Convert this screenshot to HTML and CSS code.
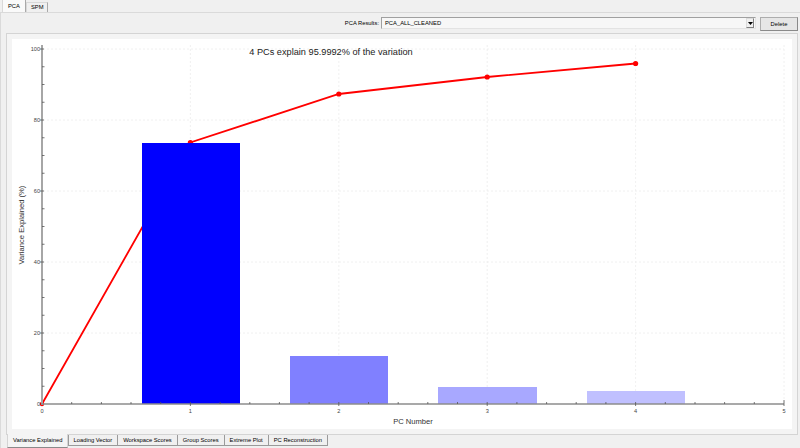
FILE: index.html
```html
<!DOCTYPE html>
<html>
<head>
<meta charset="utf-8">
<link rel="stylesheet" href="styles.css">
</head>
<body>
<div class="app">
  <div class="top-tabs">
    <div class="tab active">PCA</div>
    <div class="tab">SPM</div>
  </div>
  <div class="top-pane">
    <div class="results-row">
      <span class="results-label">PCA Results:</span>
      <div class="combo">
        <span class="combo-text">PCA_ALL_CLEANED</span>
        <span class="combo-arrow"><svg width="5" height="3" viewBox="0 0 5 3"><path d="M0 0H5L2.5 3Z" fill="#000"/></svg></span>
      </div>
      <div class="btn">Delete</div>
    </div>
    <div class="inner-tabs">
      <div class="inner-pane">
        <div class="chart">
          <svg class="plot" width="780" height="390" viewBox="12 39 780 390">
            <g class="grid">
              <path d="M43 49H784M43 120H784M43 191H784M43 262H784M43 333H784"/>
              <path d="M190.4 45V404M338.8 45V404M487.2 45V404M635.6 45V404M784 45V404"/>
            </g>
            <g class="series">
              <polyline points="42,404 190.4,142.5 338.8,94 487.2,77 635.6,63.5"/>
              <circle cx="42" cy="404" r="2.2"/>
              <circle cx="190.4" cy="142.5" r="2.6"/>
              <circle cx="338.8" cy="94" r="2.6"/>
              <circle cx="487.2" cy="77" r="2.6"/>
              <circle cx="635.6" cy="63.5" r="2.6"/>
            </g>
            <g class="bars">
              <rect x="142" y="143" width="98" height="261" fill="#0000ff"/>
              <rect x="290" y="356" width="98" height="48" fill="#8080ff"/>
              <rect x="438" y="387" width="99" height="17" fill="#a8a8ff"/>
              <rect x="587" y="391" width="98" height="13" fill="#c0c0ff"/>
            </g>
            <g class="axes">
              <path class="axis-y" d="M42 45V405"/>
              <path class="axis-x" d="M41 404H784"/>
              <path class="ticks-major" d="M40 49H44M40 120H44M40 191H44M40 262H44M40 333H44M190.4 402V406M338.8 402V406M487.2 402V406M635.6 402V406M784 400V406"/>
              <path class="ticks-minor" d="M42 386.25H44.5M42 368.5H44.5M42 350.75H44.5M42 315.25H44.5M42 297.5H44.5M42 279.75H44.5M42 244.25H44.5M42 226.5H44.5M42 208.75H44.5M42 173.25H44.5M42 155.5H44.5M42 137.75H44.5M42 102.25H44.5M42 84.5H44.5M42 66.75H44.5M71.7 402V404M101.4 402V404M131 402V404M160.7 402V404M220.1 402V404M249.8 402V404M279.4 402V404M309.1 402V404M368.5 402V404M398.2 402V404M427.8 402V404M457.5 402V404M516.9 402V404M546.6 402V404M576.2 402V404M605.9 402V404M665.3 402V404M695 402V404M724.6 402V404M754.3 402V404"/>
            </g>
            <g class="tick-labels">
              <text x="40" y="51" text-anchor="end">100</text>
              <text x="40" y="122" text-anchor="end">80</text>
              <text x="40" y="193" text-anchor="end">60</text>
              <text x="40" y="264" text-anchor="end">40</text>
              <text x="40" y="335" text-anchor="end">20</text>
              <text x="40" y="406" text-anchor="end">0</text>
              <text x="42" y="413" text-anchor="middle">0</text>
              <text x="190.4" y="413" text-anchor="middle">1</text>
              <text x="338.8" y="413" text-anchor="middle">2</text>
              <text x="487.2" y="413" text-anchor="middle">3</text>
              <text x="635.6" y="413" text-anchor="middle">4</text>
              <text x="784" y="413" text-anchor="middle">5</text>
            </g>
            <text class="axis-title" x="413" y="424" text-anchor="middle">PC Number</text>
            <text class="axis-title" transform="translate(24 225) rotate(-90)" text-anchor="middle">Variance Explained (%)</text>
            <text class="plot-title" x="331" y="55" text-anchor="middle">4 PCs explain 95.9992% of the variation</text>
          </svg>
        </div>
      </div>
      <div class="bottom-tabs">
        <div class="btab active">Variance Explained</div>
        <div class="btab">Loading Vector</div>
        <div class="btab">Workspace Scores</div>
        <div class="btab">Group Scores</div>
        <div class="btab">Extreme Plot</div>
        <div class="btab">PC Reconstruction</div>
      </div>
    </div>
  </div>
</div>
</body>
</html>
```
FILE: styles.css
```css
html, body {
  margin: 0;
  padding: 0;
}
body {
  background: #f0f0f0;
  width: 800px;
  height: 448px;
  overflow: hidden;
  font-family: "Liberation Sans", Arial, sans-serif;
  font-size: 5.8px;
  color: #000;
}
.app {
  width: 800px;
  height: 448px;
  display: flex;
  flex-direction: column;
}
.top-tabs {
  display: flex;
  align-items: flex-end;
  height: 12px;
  padding-left: 2px;
}
.tab {
  height: 9px;
  line-height: 9px;
  padding: 0 4px;
  border: 1px solid #d9d9d9;
  border-right-color: #a9a9a9;
  border-bottom: none;
  background: #f0f0f0;
}
.tab.active {
  height: 12px;
  line-height: 13px;
  padding: 0 5px;
  background: #fafafa;
  border-color: #d9d9d9;
  border-right-color: #a9a9a9;
}
.top-pane {
  flex: 1;
  border-top: 1px solid #dadada;
  border-left: 1px solid #dadada;
  padding: 4px 2px 0 5px;
  display: flex;
  flex-direction: column;
}
.results-row {
  display: flex;
  justify-content: flex-end;
  align-items: flex-start;
  height: 14px;
  margin-bottom: 2px;
}
.results-label {
  line-height: 13px;
  margin-right: 2px;
}
.combo {
  width: 375px;
  height: 12px;
  box-sizing: border-box;
  border: 1px solid #a0a0a0;
  border-right-color: #e3e3e3;
  border-bottom-color: #e3e3e3;
  background: #f7f7f7;
  display: flex;
  align-items: center;
  justify-content: space-between;
  padding: 0 1px 0 3px;
  margin-right: 4px;
}
.combo-text {
  line-height: 10px;
}
.combo-arrow {
  width: 6px;
  height: 8px;
  border: 1px solid #dcdcdc;
  border-right-color: #808080;
  border-bottom-color: #808080;
  background: #f0f0f0;
  display: flex;
  align-items: center;
  justify-content: center;
}
.btn {
  width: 38px;
  height: 14px;
  box-sizing: border-box;
  border: 1px solid #adadad;
  border-right-color: #8a8a8a;
  border-bottom-color: #8a8a8a;
  background: #e6e6e6;
  text-align: center;
  line-height: 12px;
}
.inner-tabs {
  display: flex;
  flex-direction: column;
}
.inner-pane {
  width: 792px;
  height: 402px;
  box-sizing: border-box;
  border: 1px solid #d4d4d4;
  padding: 5px;
  background: #f4f4f4;
}
.chart {
  width: 780px;
  height: 390px;
  background: #ffffff;
}
.plot {
  display: block;
}
.grid path {
  fill: none;
  stroke: #ececec;
  stroke-width: 0.8;
  stroke-dasharray: 2 2;
}
.series polyline {
  fill: none;
  stroke: #ff0000;
  stroke-width: 1.8;
}
.series circle {
  fill: #ff0000;
}
.axis-y {
  stroke: #a6a6a6;
  stroke-width: 2;
}
.axis-x {
  stroke: #8c8c8c;
  stroke-width: 1.4;
}
.ticks-major {
  stroke: #555;
  stroke-width: 0.8;
}
.ticks-minor {
  stroke: #555;
  stroke-width: 0.8;
}
.tick-labels text {
  font-family: "Liberation Sans", Arial, sans-serif;
  font-size: 5.6px;
  fill: #444;
}
.axis-title {
  font-family: "Liberation Sans", Arial, sans-serif;
  font-size: 7.6px;
  fill: #333;
}
.plot-title {
  font-family: "Liberation Sans", Arial, sans-serif;
  font-size: 9.2px;
  fill: #222;
}
.bottom-tabs {
  display: flex;
  align-items: flex-start;
  padding-left: 1px;
}
.btab {
  height: 10px;
  line-height: 10px;
  padding: 0 5px;
  border: 1px solid #9a9a9a;
  border-top: none;
  background: #f0f0f0;
  margin-left: -1px;
  white-space: nowrap;
}
.btab.active {
  height: 13px;
  margin-top: -1px;
  line-height: 12px;
  padding: 0 4px 0 5px;
  background: #f4f4f4;
  border-color: #d4d4d4;
  border-bottom-color: #8a8a8a;
  margin-left: 0;
  margin-right: 1px;
}
```
